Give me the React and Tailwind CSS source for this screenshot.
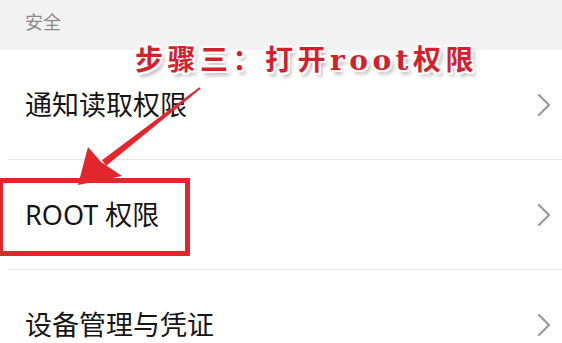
import React from 'react';

const Chevron = () => (
    <svg width="14" height="24" viewBox="0 0 14 24" fill="none">
        <path d="M2 2 L12 12 L2 22" stroke="#9a9a9a" strokeWidth="2.2" strokeLinecap="round" strokeLinejoin="round" />
    </svg>
);

const Row = ({ label }) => (
    <div className="h-[110px] ml-[8px] pl-[17px] pr-[11px] flex items-center justify-between border-b border-[#e6e6e6]">
        <span className="text-[27px] leading-none text-[#151515]">{label}</span>
        <Chevron />
    </div>
);

export default function App() {
    return (
        <div
            className="relative w-[562px] h-[343px] overflow-hidden bg-white"
            style={{ fontFamily: '"Noto Sans", "Noto Sans CJK SC", sans-serif' }}
        >
            {/* section header */}
            <div className="h-[50px] bg-[#f2f2f2] pl-[25px] pt-[11px] text-[18px] leading-[22px] text-[#8a8a8a]">
                安全
            </div>

            <Row label="通知读取权限" />
            <Row label="ROOT 权限" />
            <Row label="设备管理与凭证" />

            {/* annotation: title */}
            <div
                className="absolute left-[135px] top-[45px] text-[28px] leading-[32px] font-bold tracking-[4.5px] text-[#d41f2d] whitespace-nowrap [text-shadow:-2px_-2px_0_#fff,2px_-2px_0_#fff,-2px_2px_0_#fff,2px_2px_0_#fff,0_2px_0_#fff,2px_0_0_#fff,-2px_0_0_#fff,0_-2px_0_#fff,3px_4px_4px_rgba(0,0,0,0.35)]"
                style={{ fontFamily: '"DejaVu Serif", "Noto Sans CJK SC", serif' }}
            >
                步骤三：打开root权限
            </div>

            {/* annotation: arrow */}
            <svg className="absolute left-0 top-0" width="562" height="343" viewBox="0 0 562 343">
                <polygon points="101.9,160.3 106.2,165.8 200.6,88.8 199.4,87.2" fill="#e3262c" />
                <polygon points="78,185 88,147 101,162 122,176" fill="#e3262c" />
            </svg>

            {/* annotation: highlight box */}
            <div className="absolute left-[-2px] top-[178px] w-[192px] h-[78px] border-[5px] border-[#e3262c]" />
        </div>
    );
}
